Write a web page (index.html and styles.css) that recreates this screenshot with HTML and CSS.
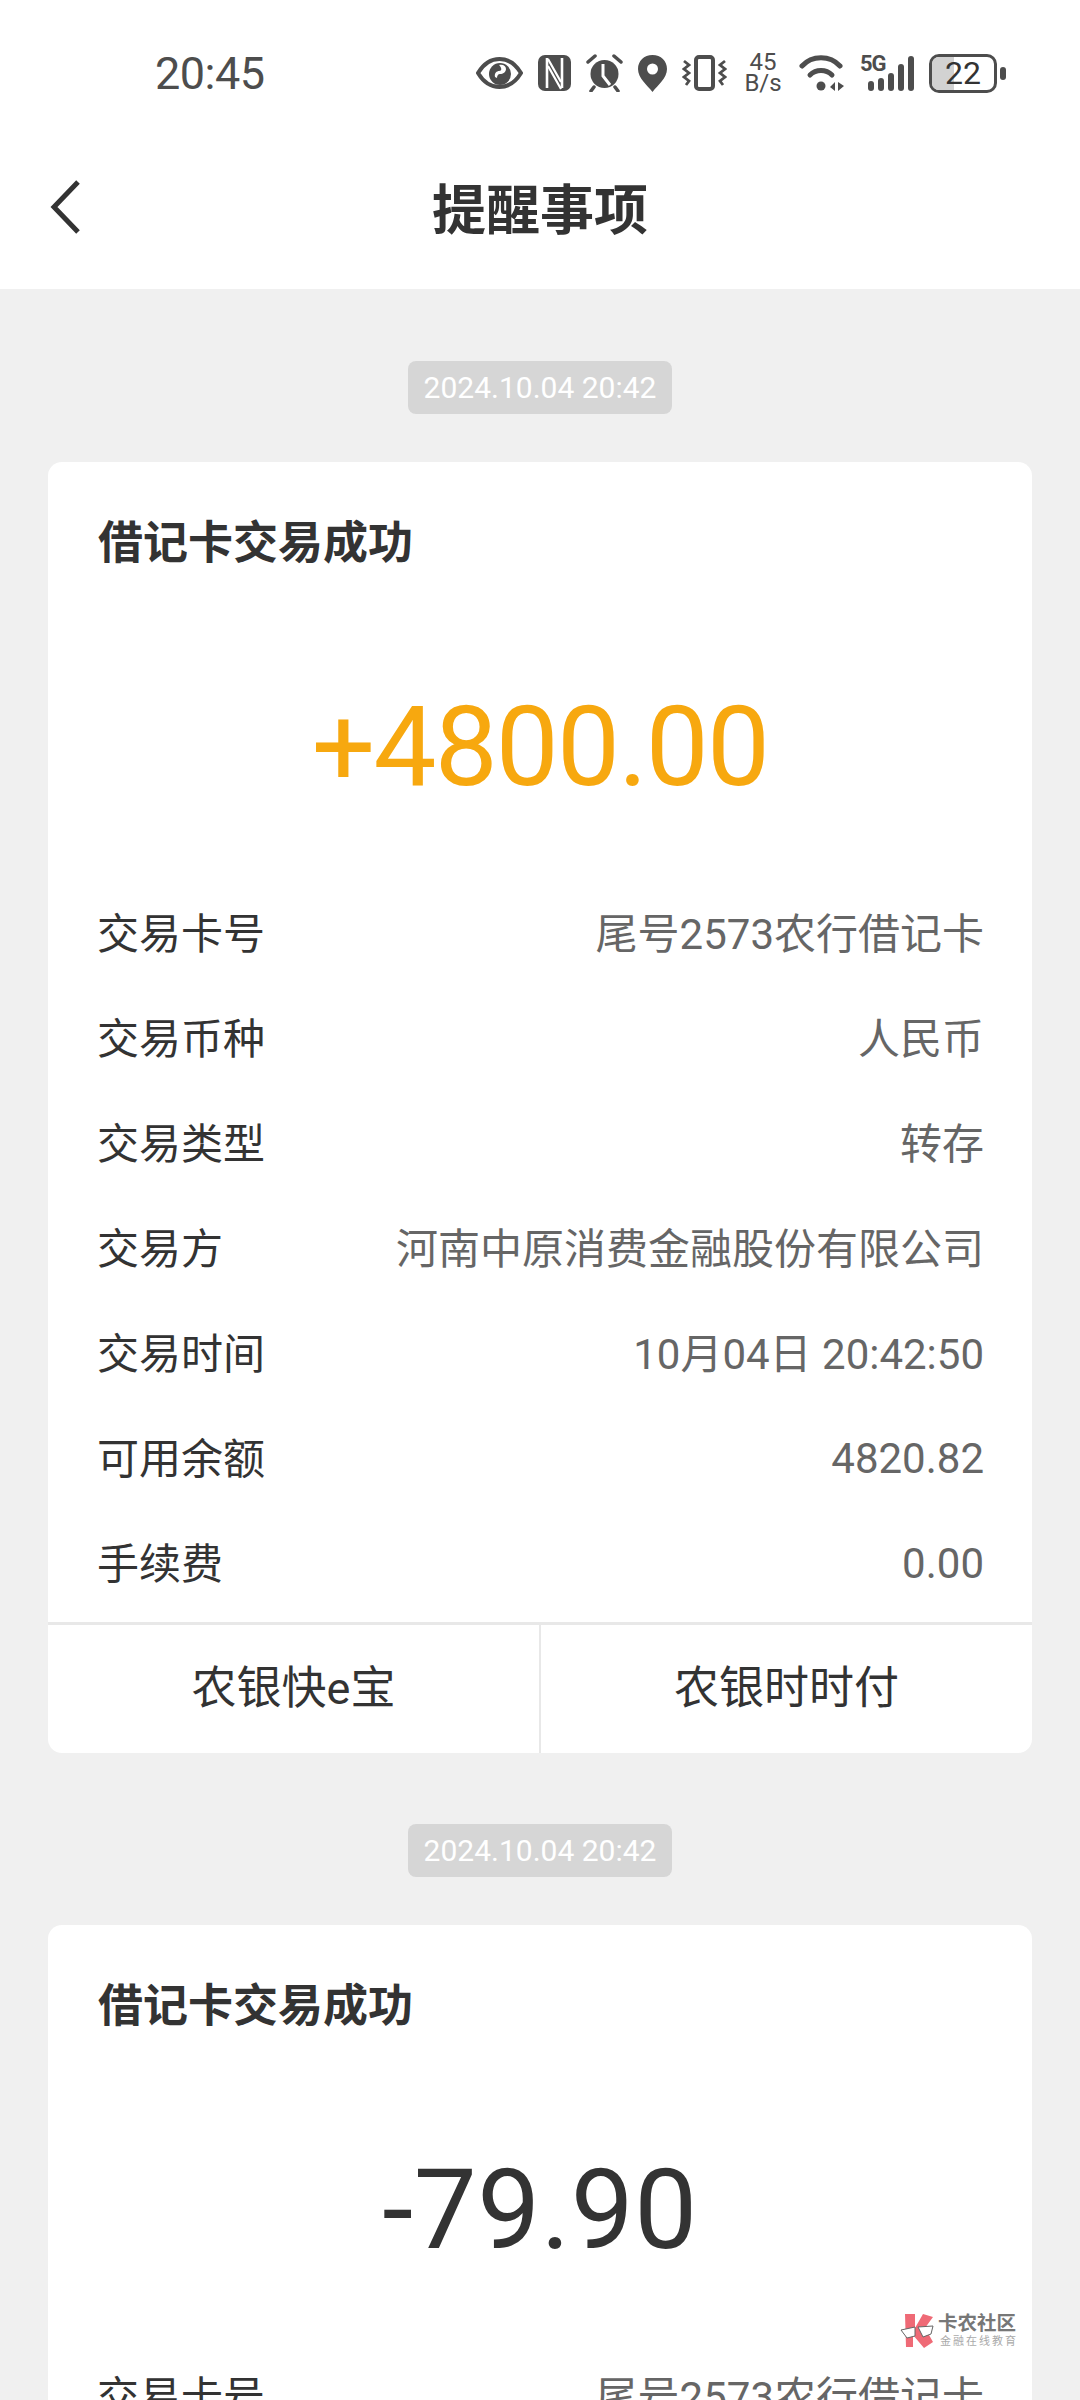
FILE: index.html
```html
<!DOCTYPE html>
<html lang="zh-CN">
<head>
  <meta charset="UTF-8" />
  <title>提醒事项</title>
  <link rel="stylesheet" href="styles.css">
</head>
<body>

  <!-- status bar + title -->
  <div class="top">
    <div class="statusbar">
      <span class="clock">20:45</span>
      <div class="status-icons">
        <svg class="ico" width="47" height="32" viewBox="0 0 47 32"><path d="M2 16C8 6 15 2 23.500 2S39 6 45 16c-6 10-13.500 14-21.500 14S8 26 2 16z" fill="none" stroke="#4d4d4d" stroke-width="4"/><circle cx="24" cy="17" r="11" fill="#4d4d4d"/><path d="M23 8c4-1 7 1 7 4s-3 5-6 5c-2 0-3 2-3 4l-2-1c-1-4 2-6 4-6 3 0 3-3 0-6z" fill="#fff"/></svg>
        <svg class="ico" width="33" height="36" viewBox="0 0 33 36"><rect width="33" height="36" rx="7" fill="#4d4d4d"/><path d="M9 3v30M24 3v30" fill="none" stroke="#fff" stroke-width="2.600"/><path d="M10 4l13 23M10 11l13 23" fill="none" stroke="#fff" stroke-width="2.200"/></svg>
        <svg class="ico" width="37" height="38" viewBox="0 0 37 38"><circle cx="18.500" cy="20" r="14" fill="#4d4d4d"/><path d="M17 10v12l7 9" fill="none" stroke="#fff" stroke-width="3"/><path d="M2 8l7-6M35 8l-7-6M8 33l-3 4M29 33l3 4" fill="none" stroke="#4d4d4d" stroke-width="3.500" stroke-linecap="round"/></svg>
        <svg class="ico" width="29" height="37" viewBox="0 0 29 37"><path d="M14.500 0C6 0 0 6 0 14c0 9 9 16 14.500 23C20 30 29 23 29 14 29 6 23 0 14.500 0z" fill="#4d4d4d"/><circle cx="14.500" cy="14" r="5.500" fill="#fff"/></svg>
        <svg class="ico" width="45" height="36" viewBox="0 0 45 36"><rect x="14" y="2" width="17" height="32" rx="3" fill="none" stroke="#4d4d4d" stroke-width="4"/><path d="M2 6l5 4-5 4 5 4-5 4 5 4-3 4M43 6l-5 4 5 4-5 4 5 4-5 4 3 4" fill="none" stroke="#4d4d4d" stroke-width="2.800"/></svg>
        <div class="speed"><span>45</span><span>B/s</span></div>
        <svg class="ico" width="46" height="36" viewBox="0 0 46 36"><path d="M3 11C13 0 31 0 41 11" fill="none" stroke="#4d4d4d" stroke-width="5" stroke-linecap="round"/><path d="M11 20c6-6 16-6 22 0" fill="none" stroke="#4d4d4d" stroke-width="5" stroke-linecap="round"/><circle cx="22" cy="31" r="4.500" fill="#4d4d4d"/><path d="M36 27l-5 5 5 4zM39 27l6 4-6 5z" fill="#4d4d4d"/></svg>
        <div class="signal">
          <span class="five-g">5G</span>
          <div class="bars"><i class="b1"></i><i class="b2"></i><i class="b3"></i><i class="b4"></i><i class="b5"></i></div>
        </div>
        <div class="battery">
          <div class="batt-body"><div class="batt-fill" style="width:22px"></div><span>22</span></div>
          <i class="batt-tip"></i>
        </div>
      </div>
    </div>
    <div class="titlebar">
      <svg class="back" width="30" height="54" viewBox="0 0 30 54"><path d="M28 2L4 27l24 25" fill="none" stroke="#333" stroke-width="5"/></svg>
      <h1>提醒事项</h1>
    </div>
  </div>

  <div class="feed">
    <div class="stamp">2024.10.04 20:42</div>
    <div class="card">
      <h2>借记卡交易成功</h2>
      <div class="amount income">+4800.00</div>
      <div class="rows">
        <div class="row"><span>交易卡号</span><span class="val">尾号2573农行借记卡</span></div>
        <div class="row"><span>交易币种</span><span class="val">人民币</span></div>
        <div class="row"><span>交易类型</span><span class="val">转存</span></div>
        <div class="row"><span>交易方</span><span class="val">河南中原消费金融股份有限公司</span></div>
        <div class="row"><span>交易时间</span><span class="val">10月04日 20:42:50</span></div>
        <div class="row"><span>可用余额</span><span class="val num">4820.82</span></div>
        <div class="row"><span>手续费</span><span class="val num">0.00</span></div>
      </div>
      <div class="actions">
        <a>农银快e宝</a>
        <a>农银时时付</a>
      </div>
    </div>

    <div class="stamp">2024.10.04 20:42</div>
    <div class="card">
      <h2>借记卡交易成功</h2>
      <div class="amount">-79.90</div>
      <div class="rows">
        <div class="row"><span>交易卡号</span><span class="val">尾号2573农行借记卡</span></div>
      </div>
    </div>
  </div>

  <!-- watermark over the screenshot -->
  <div class="watermark">
    <svg width="34" height="34" viewBox="0 0 34 34"><path d="M5 0h10v14L23 0l10 3-8 11 8 14-9 6-11-13v12H6z" fill="#ef6a76"/><path d="M1 16l14-3v9l-8 2zM18 13l15-1-2 8-8 3z" fill="#fff" stroke="#666" stroke-width="1"/></svg>
    <div class="wm-text">
      <b>卡农社区</b>
      <small>金融在线教育</small>
    </div>
  </div>

</body>
</html>
```

FILE: styles.css
```css
* {
  box-sizing: border-box;
  margin: 0;
  padding: 0;
}

html, body {
  width: 1080px;
  height: 2400px;
  overflow: hidden;
}

body {
  position: relative;
  font-family: Roboto, "Noto Sans CJK SC", sans-serif;
  background-color: #f0f0f0;
  color: #333;
}

.top {
  background-color: #fff;
  height: 289px;
}

.statusbar {
  height: 146px;
  display: flex;
  justify-content: space-between;
  align-items: center;
  padding: 0 74px 0 155px;
}

.clock {
  font-size: 45px;
  color: #4d4d4d;
  letter-spacing: -0.5px;
}

.status-icons {
  display: flex;
  align-items: center;
  gap: 15px;
}

.ico {
  display: block;
}

.speed {
  display: flex;
  flex-direction: column;
  align-items: center;
  width: 36px;
  font-size: 24px;
  line-height: 21px;
  color: #4d4d4d;
  margin: 0 3px;
}

.signal {
  position: relative;
  width: 54px;
  height: 36px;
}

.five-g {
  position: absolute;
  left: 0;
  top: -4px;
  font-size: 22px;
  line-height: 26px;
  font-weight: 700;
  letter-spacing: -1px;
  color: #4d4d4d;
}

.bars {
  position: absolute;
  right: 0;
  bottom: 0;
  display: flex;
  align-items: flex-end;
  gap: 4px;
}

.bars i {
  display: block;
  width: 6px;
  background: #4d4d4d;
  border-radius: 3px;
}

.b1 { height: 10px; }
.b2 { height: 13px; }
.b3 { height: 18px; }
.b4 { height: 27px; }
.b5 { height: 35px; }

.battery {
  display: flex;
  align-items: center;
  gap: 3px;
}

.batt-body {
  position: relative;
  width: 68px;
  height: 39px;
  border: 3px solid #4d4d4d;
  border-radius: 10px;
  display: flex;
  align-items: center;
  justify-content: center;
  overflow: hidden;
  font-size: 32px;
  color: #333;
}

.batt-fill {
  position: absolute;
  left: 0;
  top: 0;
  bottom: 0;
  background: #d2d2d2;
}

.batt-body span {
  position: relative;
}

.batt-tip {
  display: block;
  width: 6px;
  height: 13px;
  background: #4d4d4d;
  border-radius: 3px;
}

.titlebar {
  position: relative;
  height: 143px;
  display: flex;
  align-items: center;
  justify-content: center;
}

.back {
  position: absolute;
  left: 50px;
  top: 34px;
}

h1 {
  font-size: 54px;
  font-weight: 700;
  color: #333;
  margin-bottom: 23px;
}

.feed {
  display: flex;
  flex-direction: column;
  align-items: center;
  padding: 72px 48px 0;
}

.stamp {
  height: 53px;
  line-height: 53px;
  width: 264px;
  text-align: center;
  background: #d6d6d6;
  color: #fff;
  font-size: 30px;
  border-radius: 8px;
  margin-bottom: 48px;
  flex-shrink: 0;
}

.card {
  width: 984px;
  background: #fff;
  border-radius: 14px;
  margin-bottom: 71px;
  overflow: hidden;
  flex-shrink: 0;
}

h2 {
  font-size: 45px;
  font-weight: 700;
  color: #333;
  padding: 49px 50px 0;
  line-height: 66px;
}

.amount {
  text-align: center;
  font-size: 112px;
  line-height: 130px;
  margin-top: 105px;
  color: #333;
  letter-spacing: 0.5px;
}

.income {
  color: #f7a80f;
  letter-spacing: -1.8px;
}

.rows {
  padding: 66px 48px 0 49px;
}

.row {
  display: flex;
  justify-content: space-between;
  align-items: center;
  height: 105px;
  font-size: 42px;
  color: #333;
}

.val {
  color: #666;
}

.num {
  padding-top: 5px;
}

.actions {
  display: flex;
  border-top: 3px solid #e8e8e8;
  margin-top: 9px;
}

.actions a {
  flex: 1;
  height: 128px;
  line-height: 128px;
  text-align: center;
  font-size: 45px;
  color: #333;
}

.actions a + a {
  border-left: 2px solid #e8e8e8;
}

.watermark {
  position: absolute;
  left: 900px;
  top: 2313px;
  display: flex;
  align-items: center;
  gap: 4px;
}

.wm-text {
  display: flex;
  flex-direction: column;
  color: #777;
}

.wm-text b {
  font-size: 19.5px;
  line-height: 22px;
}

.wm-text small {
  font-size: 11px;
  line-height: 13px;
  letter-spacing: 2px;
  padding-left: 2px;
  color: #aaa;
}
```
